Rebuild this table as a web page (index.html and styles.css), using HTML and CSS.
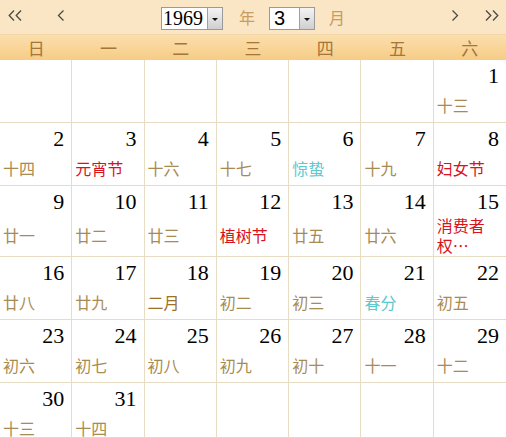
FILE: index.html
```html
<!DOCTYPE html>
<html lang="zh-CN">
<head>
<meta charset="utf-8">
<title>万年历 1969年3月</title>
<link rel="stylesheet" href="styles.css">
</head>
<body>
<div class="cal">
  <div class="top">
    <div class="nav nav-left">
      <svg class="chev2" width="16" height="11" viewBox="0 0 16 11"><polyline points="6,0.5 1.2,5.5 6,10.5"/><polyline points="13,0.5 8.2,5.5 13,10.5"/></svg>
      <svg class="chev1" width="8" height="11" viewBox="0 0 8 11"><polyline points="6.5,0.5 1.5,5.5 6.5,10.5"/></svg>
    </div>
    <div class="picker">
      <div class="sel sel-year"><span class="val">1969</span><span class="btn"><i></i></span></div>
      <span class="unit unit-year">年</span>
      <div class="sel sel-month"><span class="val">3</span><span class="btn"><i></i></span></div>
      <span class="unit unit-month">月</span>
    </div>
    <div class="nav nav-right">
      <svg class="chev1" width="8" height="11" viewBox="0 0 8 11"><polyline points="1.5,0.5 6.5,5.5 1.5,10.5"/></svg>
      <svg class="chev2" width="16" height="11" viewBox="0 0 16 11"><polyline points="3,0.5 7.8,5.5 3,10.5"/><polyline points="10,0.5 14.8,5.5 10,10.5"/></svg>
    </div>
  </div>
  <div class="week">
    <span>日</span><span>一</span><span>二</span><span>三</span><span>四</span><span>五</span><span>六</span>
  </div>
  <div class="grid">
    <div class="day empty"></div><div class="day empty"></div><div class="day empty"></div><div class="day empty"></div><div class="day empty"></div><div class="day empty"></div>
    <div class="day"><div class="num">1</div><div class="lunar">十三</div></div>

    <div class="day"><div class="num">2</div><div class="lunar">十四</div></div>
    <div class="day"><div class="num">3</div><div class="lunar fest">元宵节</div></div>
    <div class="day"><div class="num">4</div><div class="lunar">十六</div></div>
    <div class="day"><div class="num">5</div><div class="lunar">十七</div></div>
    <div class="day"><div class="num">6</div><div class="lunar term">惊蛰</div></div>
    <div class="day"><div class="num">7</div><div class="lunar">十九</div></div>
    <div class="day"><div class="num">8</div><div class="lunar fest">妇女节</div></div>

    <div class="day"><div class="num">9</div><div class="lunar">廿一</div></div>
    <div class="day"><div class="num">10</div><div class="lunar">廿二</div></div>
    <div class="day"><div class="num">11</div><div class="lunar">廿三</div></div>
    <div class="day"><div class="num">12</div><div class="lunar fest">植树节</div></div>
    <div class="day"><div class="num">13</div><div class="lunar">廿五</div></div>
    <div class="day"><div class="num">14</div><div class="lunar">廿六</div></div>
    <div class="day"><div class="num">15</div><div class="lunar fest multi"><span>消费者</span><span>权…</span></div></div>

    <div class="day"><div class="num">16</div><div class="lunar">廿八</div></div>
    <div class="day"><div class="num">17</div><div class="lunar">廿九</div></div>
    <div class="day"><div class="num">18</div><div class="lunar month">二月</div></div>
    <div class="day"><div class="num">19</div><div class="lunar">初二</div></div>
    <div class="day"><div class="num">20</div><div class="lunar">初三</div></div>
    <div class="day"><div class="num">21</div><div class="lunar term">春分</div></div>
    <div class="day"><div class="num">22</div><div class="lunar">初五</div></div>

    <div class="day"><div class="num">23</div><div class="lunar">初六</div></div>
    <div class="day"><div class="num">24</div><div class="lunar">初七</div></div>
    <div class="day"><div class="num">25</div><div class="lunar">初八</div></div>
    <div class="day"><div class="num">26</div><div class="lunar">初九</div></div>
    <div class="day"><div class="num">27</div><div class="lunar">初十</div></div>
    <div class="day"><div class="num">28</div><div class="lunar">十一</div></div>
    <div class="day"><div class="num">29</div><div class="lunar">十二</div></div>

    <div class="day"><div class="num">30</div><div class="lunar">十三</div></div>
    <div class="day"><div class="num">31</div><div class="lunar">十四</div></div>
    <div class="day empty"></div><div class="day empty"></div><div class="day empty"></div><div class="day empty"></div><div class="day empty"></div>
  </div>
</div>
</body>
</html>
```
FILE: styles.css
```css
* { box-sizing: border-box; }
html, body { margin: 0; padding: 0; background: #fff; }
body { font-family: "Noto Sans CJK SC", "Noto Sans", sans-serif; }

.cal {
  width: 506px;
  height: 438px;
  overflow: hidden;
  border-bottom: 1px solid #e3d9bf;
}

.top {
  height: 34px;
  background: #fae6c4;
  display: grid;
  grid-template-columns: 1fr auto 1fr;
  align-items: center;
}

.nav { display: flex; align-items: center; margin-top: -3px; }
.nav svg { display: block; fill: none; stroke: #4a4a4a; stroke-width: 1.3; }
.nav-left { padding-left: 8px; }
.nav-left .chev1 { margin-left: 33px; }
.nav-right { justify-self: end; padding-right: 7px; }
.nav-right .chev2 { margin-left: 24px; }

.picker { display: flex; align-items: center; margin-top: 2px; }
.sel {
  height: 23px;
  display: flex;
  background: #fff;
  border: 1px solid #9a9a9a;
}
.sel .val {
  flex: 1;
  line-height: 21px;
  font-size: 20px;
  color: #000;
  padding-left: 1px;
}
.sel-year { width: 62px; }
.sel-year .val { font-family: "Liberation Serif", serif; }
.sel-month { width: 46px; }
.sel-month .val { font-family: "Liberation Sans", sans-serif; padding-left: 4px; }
.sel .btn {
  width: 15px;
  border-left: 1px solid #a0a0a0;
  background: linear-gradient(#f4f4f4, #cfcfcf);
  display: flex;
  align-items: center;
  justify-content: center;
}
.sel .btn i {
  width: 0; height: 0;
  border-left: 3px solid transparent;
  border-right: 3px solid transparent;
  border-top: 3px solid #111;
  margin-top: 2px;
}
.unit {
  font-size: 16px;
  line-height: 20px;
  color: #c99b60;
  margin-top: -2px;
}
.unit-year { margin-left: 16px; margin-right: 14px; }
.unit-month { margin-left: 14px; }

.week {
  height: 26px;
  display: grid;
  grid-template-columns: repeat(7, 1fr);
  background: linear-gradient(#fbdfad, #f6cc86);
  border-top: 1px solid #f2d6a6;
}
.week span {
  text-align: center;
  font-size: 17px;
  line-height: 25px;
  color: #a5763a;
}

.grid {
  display: grid;
  grid-template-columns: repeat(7, 1fr);
  grid-auto-rows: minmax(63px, auto);
}
.day {
  border-right: 1px solid #e7ddc4;
  border-bottom: 1px solid #e7ddc4;
  display: flex;
  flex-direction: column;
  padding: 3px 0 1px;
}
.day:nth-child(7n) { border-right: none; }

.num {
  font-family: "Liberation Serif", serif;
  font-size: 22px;
  line-height: 26px;
  text-align: right;
  padding-right: 7px;
  color: #000;
}
.lunar {
  flex: 1;
  display: flex;
  align-items: center;
  padding-left: 3px;
  font-size: 16px;
  line-height: 20px;
  color: #a88b52;
}
.lunar.multi {
  flex-direction: column;
  align-items: flex-start;
  justify-content: center;
}
.lunar.multi span { display: block; line-height: 20px; }
.lunar.fest { color: #d9121c; }
.lunar.term { color: #5cc8cf; }
.lunar.month { color: #9a7128; }
```
